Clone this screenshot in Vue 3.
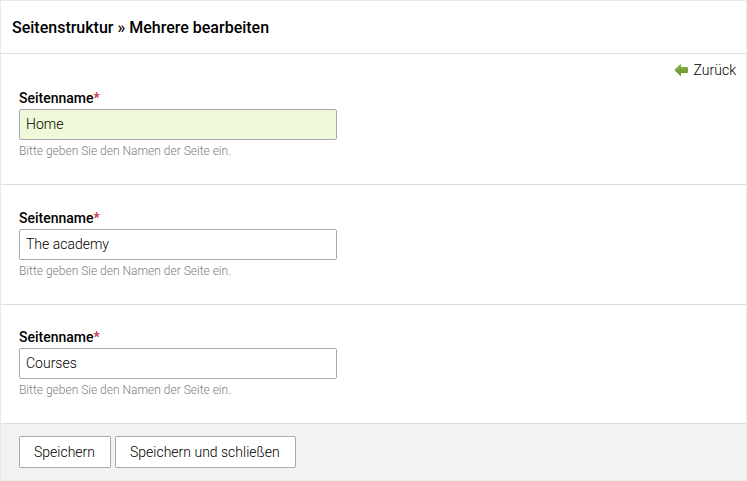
<script setup>
import { ref } from 'vue'

const pages = ref([
  { id: 1, name: 'Home', active: true },
  { id: 2, name: 'The academy', active: false },
  { id: 3, name: 'Courses', active: false },
])
</script>

<template>
  <main class="panel">
    <h1 class="title">Seitenstruktur » Mehrere bearbeiten</h1>
    <nav class="toolbar">
      <a class="back" href="#">
        <svg class="arrow" viewBox="0 0 14 12" aria-hidden="true">
          <defs>
            <linearGradient id="arrow-fill" x1="0" y1="0" x2="0" y2="1">
              <stop offset="0" stop-color="#8fb84a" />
              <stop offset="1" stop-color="#638f27" />
            </linearGradient>
          </defs>
          <path d="M0.3 6 6.2 0.2Q7 -0.2 7 0.7V3H13Q14 3 14 4V8Q14 9 13 9H7V11.3Q7 12.2 6.2 11.8Z" fill="url(#arrow-fill)" />
        </svg>
        <span>Zurück</span>
      </a>
    </nav>
    <form @submit.prevent>
      <section v-for="page in pages" :key="page.id" class="group">
        <label class="label" :for="`name-${page.id}`">Seitenname<span class="required">*</span></label>
        <input
          :id="`name-${page.id}`"
          v-model="page.name"
          class="field"
          :class="{ active: page.active }"
          type="text"
          required
          :aria-describedby="`help-${page.id}`"
        />
        <p :id="`help-${page.id}`" class="help">Bitte geben Sie den Namen der Seite ein.</p>
      </section>
      <footer class="actions">
        <button class="button" type="submit">Speichern</button>
        <button class="button" type="submit">Speichern und schließen</button>
      </footer>
    </form>
  </main>
</template>

<style>
body {
  margin: 0;
  background: #fff;
}
</style>

<style scoped>
.panel {
  box-sizing: border-box;
  border: 1px solid #e9e9e9;
  color: #000;
  font-family: Roboto, sans-serif;
  font-size: 14px;
  font-weight: 300;
  line-height: 16px;
}

.title {
  margin: 0;
  padding: 17px 11px 15px;
  border-bottom: 1px solid #ddd;
  font-size: 16px;
  font-weight: 500;
  line-height: 20px;
}

.toolbar {
  display: flex;
  justify-content: flex-end;
  padding: 8px 10px 0;
}

.back {
  display: flex;
  align-items: center;
  gap: 6px;
  color: inherit;
  text-decoration: none;
}

.arrow {
  width: 14px;
  height: 12px;
}

.group {
  display: flex;
  flex-direction: column;
  align-items: flex-start;
  gap: 3px;
  padding: 25px 18px;
  border-bottom: 1px solid #ddd;
}

.group:first-child {
  padding-top: 12px;
}

.group:nth-child(3) {
  padding-top: 24px;
}

.label {
  font-weight: 500;
}

.required {
  color: #c33;
}

.field {
  box-sizing: border-box;
  width: 100%;
  max-width: 318px;
  height: 31px;
  margin: 0;
  padding: 0 6px 2px;
  border: 1px solid #aaa;
  border-radius: 2px;
  background: #fff;
  color: inherit;
  font: inherit;
}

.field.active {
  background: #edf9d8;
}

.help {
  margin: 0;
  color: #808080;
  font-size: 12px;
}

.actions {
  display: flex;
  flex-wrap: wrap;
  gap: 4px;
  padding: 12px 18px;
  background: #f2f2f2;
}

.button {
  box-sizing: border-box;
  height: 32px;
  margin: 0;
  padding: 0 15px 0 14px;
  border: 1px solid #aaa;
  border-radius: 2px;
  background: #fff;
  color: inherit;
  font: inherit;
  cursor: pointer;
}
</style>
